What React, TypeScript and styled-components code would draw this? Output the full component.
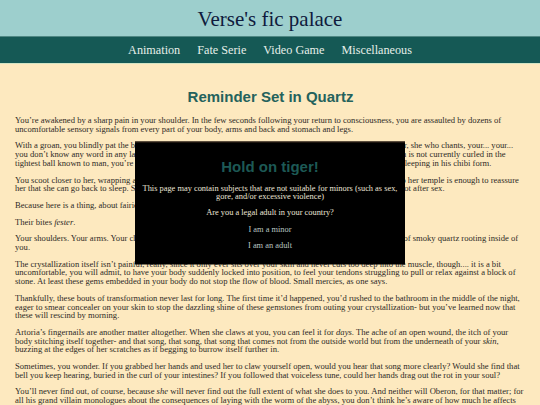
import styled, { createGlobalStyle } from 'styled-components';

const GlobalStyle = createGlobalStyle`
  html, body {
    margin: 0;
    padding: 0;
    background: #fde9bf;
  }
  body {
    font-family: "Liberation Serif", "Times New Roman", serif;
    overflow: hidden;
  }
`;

const Banner = styled.header`
  height: 36px;
  display: flex;
  align-items: center;
  justify-content: center;
  background: #9dcfcd;
`;

const SiteTitle = styled.h1`
  margin: 0;
  font-size: 21px;
  font-weight: 400;
  color: #0f1b3d;
  line-height: 1;
  padding-top: 2px;
`;

const NavBar = styled.nav`
  height: 26px;
  display: flex;
  align-items: center;
  justify-content: center;
  gap: 17px;
  background: #155955;
  border-top: 1px solid #4f8884;
  border-bottom: 1px solid #d3e4c4;
`;

const NavLink = styled.a`
  font-size: 12.2px;
  color: #e6efe9;
  text-decoration: none;
  cursor: pointer;
`;

const Story = styled.main`
  padding: 0 14px 0 15px;
`;

const StoryTitle = styled.h2`
  margin: 24px 0 11px;
  text-align: center;
  font-family: "Liberation Sans", Arial, sans-serif;
  font-size: 15px;
  font-weight: 700;
  color: #24625c;
`;

const Para = styled.p`
  margin: 0 0 8px;
  font-size: 8.6px;
  line-height: 8.7px;
  color: #2e2a26;
`;

const Gate = styled.div`
  position: fixed;
  top: 50%;
  left: 50%;
  transform: translate(-50%, -50%);
  width: 270px;
  box-sizing: border-box;
  padding: 16px 6px 13px;
  background: #000;
  border-top: 1px solid #3b2c1f;
  text-align: center;
`;

const GateTitle = styled.h3`
  margin: 0 0 10px;
  font-family: "Liberation Sans", Arial, sans-serif;
  font-size: 15px;
  font-weight: 700;
  color: #1d5955;
`;

const GateText = styled.p`
  margin: 0 0 7.5px;
  font-size: 8.4px;
  line-height: 8.7px;
  color: #ece5d7;
`;

const GateChoice = styled.a<{ $last?: boolean }>`
  display: block;
  margin-bottom: ${({ $last }) => ($last ? '0' : '7.5px')};
  font-size: 8.4px;
  line-height: 8.7px;
  color: #b9c5c0;
  text-decoration: none;
  cursor: pointer;
`;

const sections = ['Animation', 'Fate Serie', 'Video Game', 'Miscellaneous'];

export default function App() {
  return (
    <>
      <GlobalStyle />
      <Banner>
        <SiteTitle>Verse's fic palace</SiteTitle>
      </Banner>
      <NavBar>
        {sections.map((s) => (
          <NavLink key={s}>{s}</NavLink>
        ))}
      </NavBar>
      <Story>
        <StoryTitle>Reminder Set in Quartz</StoryTitle>
        <Para>
          You’re awakened by a sharp pain in your shoulder. In the few seconds following your return to
          consciousness, you are assaulted by dozens of uncomfortable sensory signals from every part of your
          body, arms and back and stomach and legs.
        </Para>
        <Para>
          With a groan, you blindly pat the bed beside you, reaching for the warmth of your beloved fairy queen, your
          lover, she who chants, your... your... you don’t know any word in any language that could ever do her
          justice. She’s right there beside you, and Oberon is not currently curled in the tightest ball known to
          man, you’re willing to bet he’s somewhere up on the pillow above your heads, peacefully sleeping in his
          chibi form.
        </Para>
        <Para>
          You scoot closer to her, wrapping arms around her waist and gently pulling her close. A single soft kiss
          pressed to her temple is enough to reassure her that she can go back to sleep. She has never liked to see
          you hurting, nor see you woken by pain- especially not after sex.
        </Para>
        <Para>Because here is a thing, about fairies and their queens.</Para>
        <Para>
          Their bites <em>fester</em>.
        </Para>
        <Para>
          Your shoulders. Your arms. Your chest, your belly, your thighs, all blooming with clusters and jagged tiny
          points of smoky quartz rooting inside of you.
        </Para>
        <Para>
          The crystallization itself isn’t painful, really, since it only ever sits over your skin and never cuts too
          deep into the muscle, though.... it is a bit uncomfortable, you will admit, to have your body suddenly
          locked into position, to feel your tendons struggling to pull or relax against a block of stone. At least
          these gems embedded in your body do not stop the flow of blood. Small mercies, as one says.
        </Para>
        <Para>
          Thankfully, these bouts of transformation never last for long. The first time it’d happened, you’d rushed
          to the bathroom in the middle of the night, eager to smear concealer on your skin to stop the dazzling
          shine of these gemstones from outing your crystallization- but you’ve learned now that these will rescind
          by morning.
        </Para>
        <Para>
          Artoria’s fingernails are another matter altogether. When she claws at you, you can feel it for{' '}
          <em>days</em>. The ache of an open wound, the itch of your body stitching itself together- and that song,
          that song, that song that comes not from the outside world but from the underneath of your <em>skin</em>,
          buzzing at the edges of her scratches as if begging to burrow itself further in.
        </Para>
        <Para>
          Sometimes, you wonder. If you grabbed her hands and used her to claw yourself open, would you hear that
          song more clearly? Would she find that bell you keep hearing, buried in the curl of your intestines? If you
          followed that voiceless tune, could her hands drag out the rot in your soul?
        </Para>
        <Para>
          You’ll never find out, of course, because <em>she</em> will never find out the full extent of what she
          does to you. And neither will Oberon, for that matter; for all his grand villain monologues about the
          consequences of laying with the worm of the abyss, you don’t think he’s aware of how much he affects you
          either. Not that you would ever tell him, of course; he would only laugh.
        </Para>
      </Story>
      <Gate role="dialog" aria-modal="true">
        <GateTitle>Hold on tiger!</GateTitle>
        <GateText>
          This page may contain subjects that are not suitable for minors (such as sex, gore, and/or excessive
          violence)
        </GateText>
        <GateText>Are you a legal adult in your country?</GateText>
        <GateChoice>I am a minor</GateChoice>
        <GateChoice $last>I am an adult</GateChoice>
      </Gate>
    </>
  );
}
